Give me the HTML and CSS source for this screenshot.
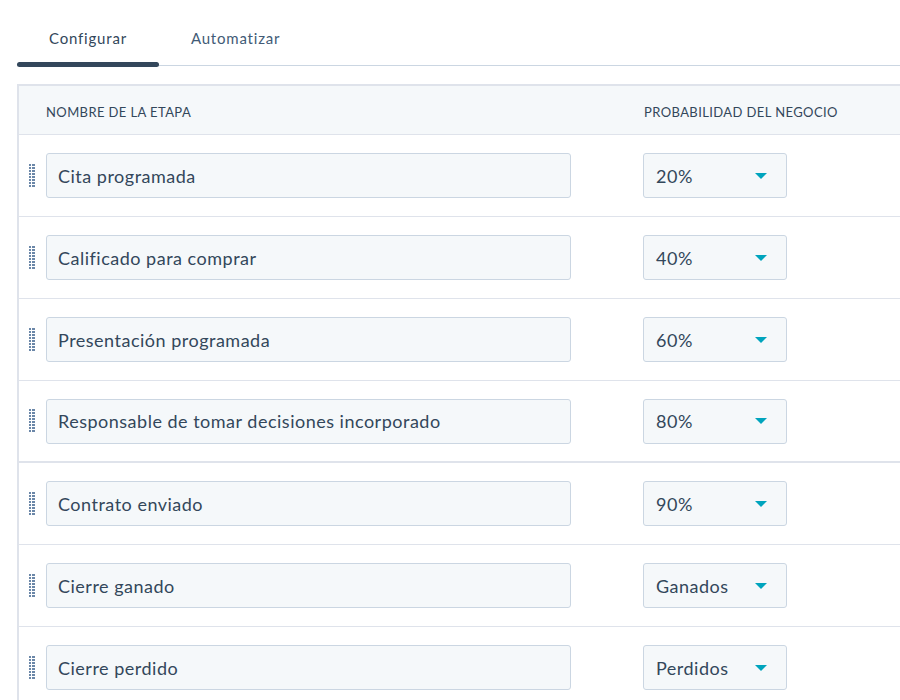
FILE: index.html
```html
<!DOCTYPE html>
<html lang="es">
<head>
    <meta charset="UTF-8">
    <title>Etapas del negocio</title>
    <link rel="stylesheet" href="styles.css">
</head>
<body>
    <nav class="tabs">
        <div class="tab active">Configurar</div>
        <div class="tab">Automatizar</div>
    </nav>

    <div class="stage-table">
        <div class="stage-row head">
            <span></span>
            <div class="col-title">Nombre de la etapa</div>
            <span></span>
            <div class="col-title">Probabilidad del negocio</div>
        </div>

        <div class="stage-row">
            <span class="handle"></span>
            <div class="field">Cita programada</div>
            <span></span>
            <div class="select">20%<i class="caret"></i></div>
        </div>
        <div class="stage-row">
            <span class="handle"></span>
            <div class="field">Calificado para comprar</div>
            <span></span>
            <div class="select">40%<i class="caret"></i></div>
        </div>
        <div class="stage-row">
            <span class="handle"></span>
            <div class="field">Presentación programada</div>
            <span></span>
            <div class="select">60%<i class="caret"></i></div>
        </div>
        <div class="stage-row thick">
            <span class="handle"></span>
            <div class="field">Responsable de tomar decisiones incorporado</div>
            <span></span>
            <div class="select">80%<i class="caret"></i></div>
        </div>
        <div class="stage-row">
            <span class="handle"></span>
            <div class="field">Contrato enviado</div>
            <span></span>
            <div class="select">90%<i class="caret"></i></div>
        </div>
        <div class="stage-row">
            <span class="handle"></span>
            <div class="field">Cierre ganado</div>
            <span></span>
            <div class="select">Ganados<i class="caret"></i></div>
        </div>
        <div class="stage-row">
            <span class="handle"></span>
            <div class="field">Cierre perdido</div>
            <span></span>
            <div class="select">Perdidos<i class="caret"></i></div>
        </div>
    </div>
</body>
</html>
```

FILE: styles.css
```css
* {
    box-sizing: border-box;
    margin: 0;
    padding: 0;
}

body {
    background: #fff;
    font-family: Lato, "Open Sans", sans-serif;
    color: #33475b;
    overflow: hidden;
}

.tabs {
    display: flex;
    margin: 0 0 0 17px;
    border-bottom: 1px solid #cbd6e2;
    height: 66px;
    padding-top: 29px;
}

.tab {
    position: relative;
    padding: 0 32px;
    font-size: 15px;
    letter-spacing: 0.8px;
    color: #425b76;
}

.tab.active {
    color: #33475b;
}

.tab.active::after {
    content: "";
    position: absolute;
    left: 0;
    right: 0;
    top: 33px;
    height: 5px;
    border-radius: 3px;
    background: #33475b;
}

.stage-table {
    margin: 18px 0 0 17px;
    border-top: 2px solid #dfe3eb;
    border-left: 2px solid #dfe3eb;
}

.stage-row {
    display: grid;
    grid-template-columns: 27px 525px 72px 144px 1fr;
    align-items: center;
    height: 82px;
    border-bottom: 1px solid #dfe3eb;
}

.stage-row.thick {
    border-bottom-width: 2px;
}

.stage-row.head {
    height: 49px;
    background: #f5f8fa;
}

.col-title {
    font-size: 13px;
    letter-spacing: 0.4px;
    text-transform: uppercase;
    white-space: nowrap;
    padding-top: 3px;
}

.stage-row.head .col-title:last-of-type {
    padding-left: 1px;
}

.handle {
    justify-self: start;
    margin-left: 10px;
    width: 6px;
    height: 24px;
    background: repeating-linear-gradient(to bottom, #6b87a8 0 2px, transparent 2px 3px);
    -webkit-mask: linear-gradient(to right, #000 0 2.5px, transparent 2.5px 3.5px, #000 3.5px 6px);
    mask: linear-gradient(to right, #000 0 2.5px, transparent 2.5px 3.5px, #000 3.5px 6px);
}

.field,
.select {
    height: 45px;
    background: #f5f8fa;
    border: 1px solid #cbd6e2;
    border-radius: 3px;
    display: flex;
    align-items: center;
    font-size: 18px;
    letter-spacing: 0.5px;
    padding: 0 11px;
}

.select {
    padding-left: 12px;
    justify-content: space-between;
    padding-right: 19px;
}

.caret {
    width: 0;
    height: 0;
    border-left: 6px solid transparent;
    border-right: 6px solid transparent;
    border-top: 6px solid #00a4bd;
}
```
